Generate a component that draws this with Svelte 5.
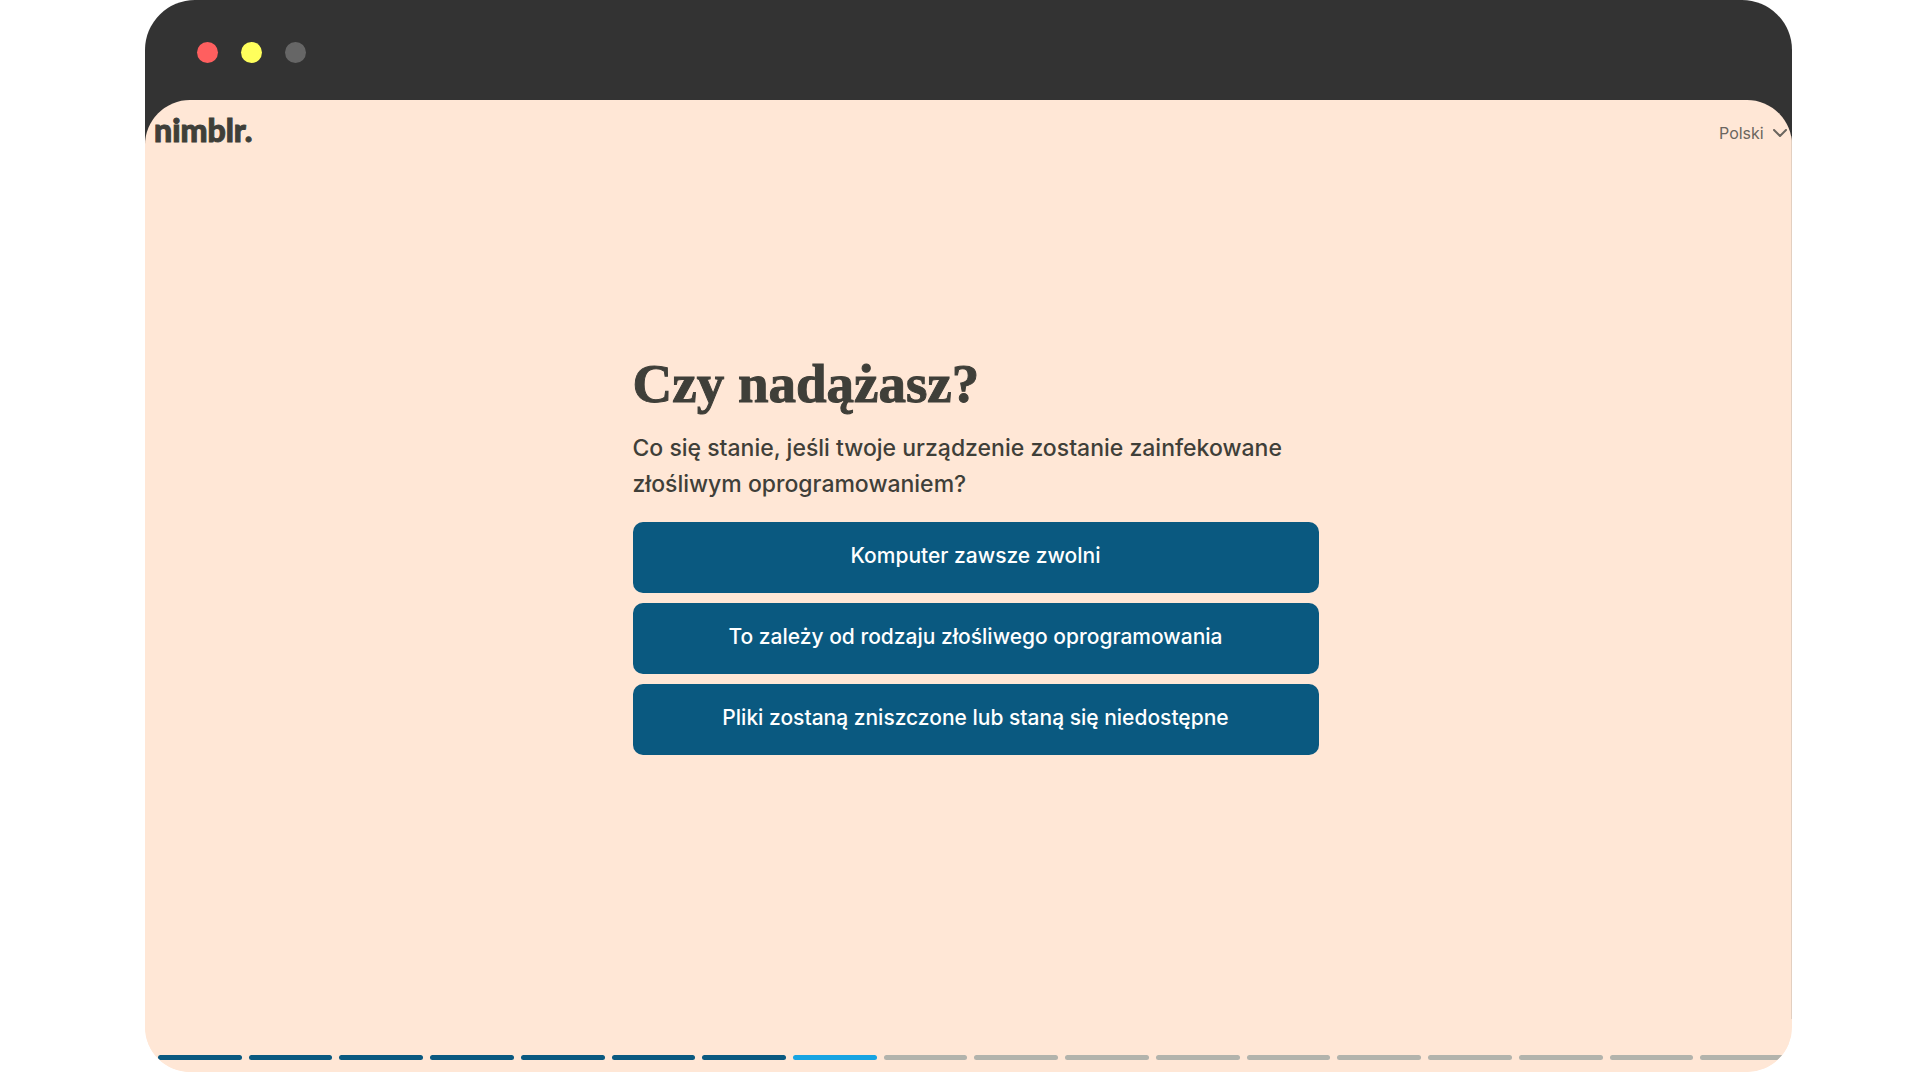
<script>
    const languages = ["Polski"];
    const answers = [
        "Komputer zawsze zwolni",
        "To zależy od rodzaju złośliwego oprogramowania",
        "Pliki zostaną zniszczone lub staną się niedostępne",
    ];
    const total = 18;
    const current = 8;

    let language = $state("Polski");

    const steps = Array.from({ length: total }, (_, index) => {
        if (index + 1 < current) return "done";
        return index + 1 === current ? "active" : "todo";
    });
</script>

<div class="window">
    <div class="titlebar">
        <span class="dot red"></span>
        <span class="dot yellow"></span>
        <span class="dot grey"></span>
    </div>

    <div class="screen">
        <div class="page">
            <header>
                <a class="logo" href="/">nimblr.</a>
                <div class="language">
                    <select aria-label="Język" bind:value={language}>
                        {#each languages as name}
                            <option value={name}>{name}</option>
                        {/each}
                    </select>
                    <svg width="14" height="8" viewBox="0 0 14 8" aria-hidden="true">
                        <path d="M1 1L7 7L13 1"/>
                    </svg>
                </div>
            </header>

            <main>
                <section class="quiz">
                    <h1>Czy nadążasz?</h1>
                    <p>Co się stanie, jeśli twoje urządzenie zostanie zainfekowane złośliwym oprogramowaniem?</p>
                    <div class="answers">
                        {#each answers as answer}
                            <button type="button">{answer}</button>
                        {/each}
                    </div>
                </section>
            </main>
        </div>

        <footer>
            {#each steps as step}
                <span class="step {step}"></span>
            {/each}
        </footer>
    </div>
</div>

<style>
    :global(body) {
        background: #ffffff;
    }

    .window {
        display: flex;
        flex-direction: column;
        box-sizing: border-box;
        min-height: calc(100vh - 8px);
        margin: 0 128px 8px 145px;
        border-radius: 50px 50px 45px 45px;
        background: linear-gradient(#333333 200px, #ffe7d6 200px);
        font-family: Inter, "Liberation Sans", sans-serif;
        color: #3f3f39;
        overflow: hidden;
    }

    .titlebar {
        display: flex;
        align-items: center;
        gap: 23px;
        height: 100px;
        padding: 4px 52px 0;
        box-sizing: border-box;
    }

    .dot {
        width: 21px;
        height: 21px;
        border-radius: 50%;
    }

    .red {
        background: #ff5f5f;
    }

    .yellow {
        background: #ffff5c;
    }

    .grey {
        background: #666666;
    }

    .screen {
        flex: 1;
        display: flex;
        flex-direction: column;
        border-radius: 45px;
        background: #ffe7d6;
        overflow: hidden;
    }

    .page {
        flex: 1;
        display: flex;
        flex-direction: column;
        border-right: 1px solid #e3cfc0;
    }

    header {
        display: flex;
        justify-content: space-between;
        align-items: flex-start;
        padding: 10px 4px 14px 9px;
    }

    .logo {
        font-family: Lato, sans-serif;
        font-size: 32px;
        font-weight: 900;
        line-height: 40px;
        color: #3f3f39;
        -webkit-text-stroke: 1px #3f3f39;
        text-decoration: none;
    }

    .language {
        display: flex;
        position: relative;
        padding-top: 11px;
        color: #6b665f;
    }

    .language select {
        appearance: none;
        margin: 0;
        padding: 0 23px 0 0;
        border: 0;
        background: none;
        font: 16px/24px Inter, "Liberation Sans", sans-serif;
        color: inherit;
    }

    .language svg {
        position: absolute;
        right: 0;
        top: 19px;
        pointer-events: none;
    }

    .language path {
        fill: none;
        stroke: currentColor;
        stroke-width: 2;
        stroke-linecap: round;
        stroke-linejoin: round;
    }

    main {
        flex: 1;
        display: flex;
        justify-content: center;
        align-items: center;
        padding: 0 0 76px 15px;
    }

    .quiz {
        width: 686px;
        max-width: 100%;
    }

    h1 {
        margin: 0 0 14px;
        font-family: "Liberation Serif", serif;
        font-size: 55px;
        font-weight: 700;
        line-height: 64px;
        -webkit-text-stroke: 1px #3f3f39;
    }

    p {
        margin: 0 0 20px;
        font-size: 23px;
        font-weight: 500;
        line-height: 36px;
    }

    .answers {
        display: flex;
        flex-direction: column;
        gap: 10px;
    }

    button {
        min-height: 71px;
        padding: 0 16px 3px;
        border: 0;
        border-radius: 10px;
        background: #0a5980;
        font: 500 21px/32px Inter, "Liberation Sans", sans-serif;
        color: #ffffff;
        cursor: pointer;
    }

    footer {
        display: flex;
        gap: 7px;
        padding: 36px 8px 12px 13px;
    }

    .step {
        flex: 1;
        height: 5px;
        border-radius: 3px;
    }

    .done {
        background: #0a5980;
    }

    .active {
        background: #18a4e2;
    }

    .todo {
        background: #b2b3ac;
    }
</style>
